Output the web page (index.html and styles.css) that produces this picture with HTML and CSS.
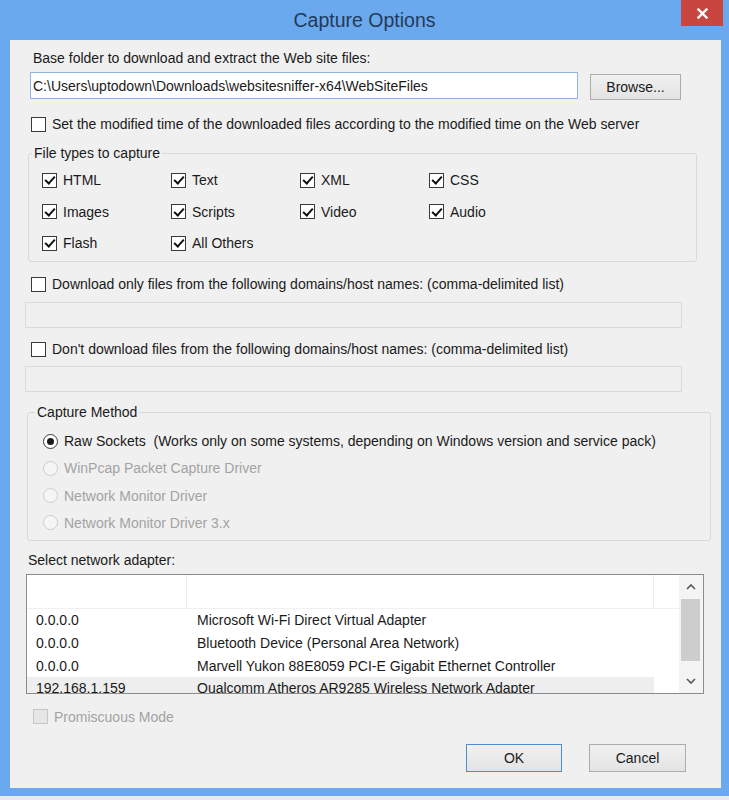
FILE: index.html
```html
<!DOCTYPE html>
<html lang="en">
<head>
  <meta charset="UTF-8" />
  <title>Capture Options</title>
  <link rel="stylesheet" href="styles.css">
</head>

<body>
  <div class="window">
    <!-- Title bar -->
    <div class="titlebar">
      <span></span>
      <h1 class="title">Capture Options</h1>
      <button class="close" aria-label="Close">
        <svg width="11" height="11" viewBox="0 0 11 11">
          <path d="M1.5,1.5 L9.5,9.5 M9.5,1.5 L1.5,9.5" stroke="#fff" stroke-width="2.4" stroke-linecap="square"/>
        </svg>
      </button>
    </div>

    <div class="client">
      <p class="base-label">Base folder to download and extract the Web site files:</p>
      <div class="folder-row">
        <input class="textbox" type="text" value="C:\Users\uptodown\Downloads\websitesniffer-x64\WebSiteFiles">
        <button class="btn browse">Browse...</button>
      </div>

      <label class="check modtime"><span class="box"></span>Set the modified time of the downloaded files according to the modified time on the Web server</label>

      <!-- File types -->
      <fieldset class="group types-group">
        <legend>File types to capture</legend>
        <div class="types">
          <label class="check"><span class="box on"></span>HTML</label>
          <label class="check"><span class="box on"></span>Text</label>
          <label class="check"><span class="box on"></span>XML</label>
          <label class="check"><span class="box on"></span>CSS</label>
          <label class="check"><span class="box on"></span>Images</label>
          <label class="check"><span class="box on"></span>Scripts</label>
          <label class="check"><span class="box on"></span>Video</label>
          <label class="check"><span class="box on"></span>Audio</label>
          <label class="check"><span class="box on"></span>Flash</label>
          <label class="check"><span class="box on"></span>All Others</label>
        </div>
      </fieldset>

      <!-- Domain filters -->
      <label class="check domain-only"><span class="box"></span>Download only files from the following domains/host names: (comma-delimited list)</label>
      <div class="field field-only"></div>
      <label class="check domain-skip"><span class="box"></span>Don't download files from the following domains/host names: (comma-delimited list)</label>
      <div class="field field-skip"></div>

      <!-- Capture method -->
      <fieldset class="group method-group">
        <legend>Capture Method</legend>
        <div class="radios">
          <label class="check"><span class="radio on"></span>Raw Sockets&nbsp; (Works only on some systems, depending on Windows version and service pack)</label>
          <label class="check disabled"><span class="radio"></span>WinPcap Packet Capture Driver</label>
          <label class="check disabled"><span class="radio"></span>Network Monitor Driver</label>
          <label class="check disabled"><span class="radio"></span>Network Monitor Driver 3.x</label>
        </div>
      </fieldset>

      <p class="adapter-label">Select network adapter:</p>
      <div class="list">
        <div class="list-body">
          <div class="list-head">
            <span></span>
            <span></span>
            <span class="last"></span>
          </div>
          <div class="row"><span>0.0.0.0</span><span>Microsoft Wi-Fi Direct Virtual Adapter</span></div>
          <div class="row"><span>0.0.0.0</span><span>Bluetooth Device (Personal Area Network)</span></div>
          <div class="row"><span>0.0.0.0</span><span>Marvell Yukon 88E8059 PCI-E Gigabit Ethernet Controller</span></div>
          <div class="row selected"><span>192.168.1.159</span><span>Qualcomm Atheros AR9285 Wireless Network Adapter</span></div>
        </div>
        <div class="scroll">
          <div class="sb-btn">
            <svg width="10" height="6" viewBox="0 0 10 6"><polyline points="1,5 5,1 9,5" fill="none" stroke="#555" stroke-width="1.6"/></svg>
          </div>
          <div class="sb-thumb"></div>
          <div class="sb-space"></div>
          <div class="sb-btn">
            <svg width="10" height="6" viewBox="0 0 10 6"><polyline points="1,1 5,5 9,1" fill="none" stroke="#555" stroke-width="1.6"/></svg>
          </div>
        </div>
      </div>

      <label class="check disabled promisc"><span class="box off"></span>Promiscuous Mode</label>

      <div class="actions">
        <button class="btn default">OK</button>
        <button class="btn cancel">Cancel</button>
      </div>
    </div>

    <div class="under"></div>
  </div>
</body>
</html>
```

FILE: styles.css
```css
/* Reset */
* {
  margin: 0;
  padding: 0;
  box-sizing: border-box;
}
body {
  font-family: "Liberation Sans", Arial, sans-serif;
  font-size: 14px;
  color: #1a1a1a;
  background: #6aa9ee;
}

/* Window frame */
.window {
  width: 729px;
  height: 800px;
  background: #6aa9ee;
  display: flex;
  flex-direction: column;
  overflow: hidden;
}
.titlebar {
  height: 40px;
  display: grid;
  grid-template-columns: 1fr auto 1fr;
}
.title {
  font-weight: normal;
  font-size: 19.5px;
  line-height: 40px;
  color: #243a58;
}
.close {
  justify-self: end;
  align-self: start;
  width: 42px;
  height: 26px;
  margin-right: 6px;
  border: 0;
  background: #c8463f;
  display: flex;
  align-items: center;
  justify-content: center;
}
.client {
  height: 748px;
  margin: 0 8px 0 10px;
  background: #f0f0f0;
  display: flex;
  flex-direction: column;
  align-items: flex-start;
}
.under {
  margin-top: 8px;
  height: 4px;
  background: #e9e9e9;
}

/* Base folder */
.base-label {
  margin: 9px 0 0 23px;
  line-height: 18px;
}
.folder-row {
  display: flex;
  align-items: flex-start;
  margin: 5px 0 0 20px;
}
.textbox {
  width: 548px;
  height: 27px;
  border: 1px solid #8fb4e0;
  background: #fff;
  font: inherit;
  color: inherit;
  padding: 0 2px;
}
.btn {
  font: inherit;
  color: #1a1a1a;
  background: linear-gradient(#f0f0f0, #e3e3e3);
  border: 1px solid #acacac;
}
.browse {
  width: 91px;
  height: 26px;
  margin: 2px 0 0 12px;
}

/* Checkboxes and radios */
.check {
  display: flex;
  align-items: center;
  gap: 6px;
  height: 18px;
  white-space: nowrap;
}
.box,
.radio {
  width: 15px;
  height: 15px;
  flex: none;
  border: 1px solid #3a3a3a;
  background: #fff;
  display: grid;
  place-items: center;
}
.box.on::after {
  content: "";
  width: 4px;
  height: 8px;
  margin-top: -2px;
  border: solid #111;
  border-width: 0 2.5px 2.5px 0;
  transform: rotate(42deg);
}
.radio {
  border-radius: 50%;
}
.radio.on::after {
  content: "";
  width: 7px;
  height: 7px;
  border-radius: 50%;
  background: #1a1a1a;
}
.disabled {
  color: #a3a3a3;
}
.disabled .radio {
  border-color: #cdcdcd;
  background: #f5f5f5;
}
.disabled .box {
  border-color: #c6c6c6;
  background: #e6e6e6;
}
.modtime {
  margin: 15px 0 0 21px;
}

/* Group boxes */
.group {
  border: 1px solid #d9d9d9;
  border-radius: 3px;
}
.group legend {
  line-height: 18px;
  padding: 0 2px;
}
.types-group {
  margin: 11px 0 0 18px;
  width: 669px;
}
.types-group legend {
  margin-left: 3px;
}
.types {
  display: grid;
  grid-template-columns: repeat(4, 129px);
  row-gap: 13.5px;
  padding: 9px 0 9px 13px;
}

/* Domain lists */
.domain-only {
  margin: 13px 0 0 21px;
}
.domain-skip {
  margin: 12px 0 0 21px;
}
.field {
  width: 657px;
  height: 26px;
  margin-left: 15px;
  border: 1px solid #dadada;
  background: #f0f0f0;
}
.field-only {
  margin-top: 9px;
}
.field-skip {
  margin-top: 8px;
}

/* Capture method */
.method-group {
  margin: 11px 0 0 17px;
  width: 684px;
}
.method-group legend {
  margin-left: 7px;
}
.radios {
  display: flex;
  flex-direction: column;
  gap: 9.33px;
  padding: 11px 0 8px 15px;
}

/* Adapter list */
.adapter-label {
  margin: 10px 0 0 18px;
  line-height: 18px;
}
.list {
  width: 678px;
  height: 120px;
  margin: 5px 0 0 16px;
  border: 1px solid #8c8c8c;
  display: flex;
  background: #fff;
}
.list-body {
  flex: 1;
  overflow: hidden;
}
.list-head {
  display: grid;
  grid-template-columns: 160px 467px 1fr;
  height: 34px;
  border-bottom: 1px solid #f0f0f0;
}
.list-head span {
  border-right: 1px solid #ececec;
}
.list-head span.last {
  border-right: 0;
}
.row {
  width: 627px;
  height: 22.67px;
  display: grid;
  grid-template-columns: 160px 467px;
  align-items: center;
  white-space: nowrap;
}
.row span:first-child {
  padding-left: 9px;
}
.row span + span {
  padding-left: 10px;
}
.row.selected {
  background: #eeeeee;
}
.scroll {
  width: 24px;
  background: #f4f4f4;
  display: flex;
  flex-direction: column;
}
.sb-btn {
  height: 24px;
  display: flex;
  align-items: center;
  justify-content: center;
}
.sb-thumb {
  height: 62px;
  margin: 0 3px 0 2px;
  background: #cdcdcd;
}
.sb-space {
  flex: 1;
}

/* Bottom */
.promisc {
  margin: 14px 0 0 23px;
}
.actions {
  display: flex;
  gap: 27px;
  align-self: flex-end;
  margin: 18px 35px 0 0;
}
.actions .btn {
  height: 28px;
}
.default {
  width: 96px;
  border-color: #4a8fd0;
}
.cancel {
  width: 97px;
}
```
